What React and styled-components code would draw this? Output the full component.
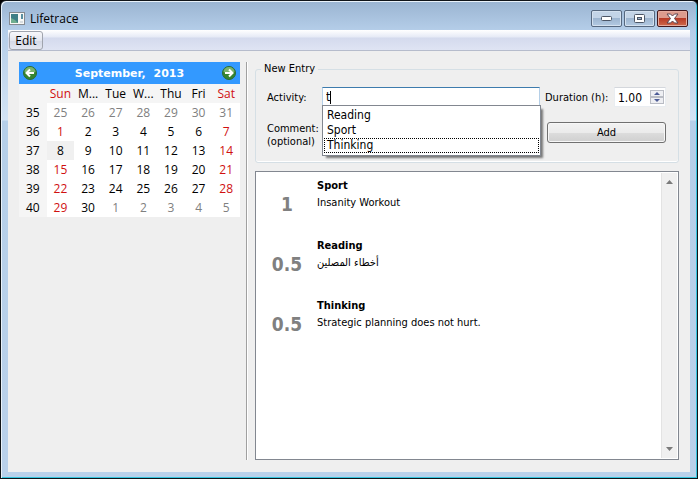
import React, { useState } from 'react';
import styled, { createGlobalStyle, css } from 'styled-components';

const GlobalStyle = createGlobalStyle`
  * {
    box-sizing: border-box;
  }

  body {
    margin: 0;
    background: #000;
    color: #000;
    font: 11px/14px "DejaVu Sans Condensed", "DejaVu Sans", Tahoma, sans-serif;
  }

  button,
  input,
  textarea {
    font: inherit;
    color: inherit;
  }
`;

const Window = styled.div`
  display: flex;
  flex-direction: column;
  min-height: 100vh;
  padding: 0 6px 6px;
  border: 1px solid #101418;
  border-radius: 6px 6px 0 0;
  background: linear-gradient(#9ab4d1, #b5cee9 30px, #d3e4f5 119px, #b5cfe9 120px, #bad1ea);
  box-shadow: inset 1px 1px 0 #e9f2fa, inset -1px -1px 0 #35c5de;
`;

const TitleBar = styled.header`
  display: flex;
  align-items: center;
  gap: 5px;
  height: 29px;
  padding: 6px 3px 0 2px;
`;

const Title = styled.h1`
  flex: 1;
  margin: 0;
  font: 12px/16px "Open Sans", sans-serif;
`;

const WindowButtons = styled.div`
  display: flex;
  align-self: flex-start;
  gap: 2px;
  margin-top: 3px;
`;

const WindowButton = styled.button`
  display: flex;
  align-items: center;
  justify-content: center;
  width: 31px;
  height: 17px;
  padding: 0;
  border: 1px solid #56687f;
  border-radius: 2px;
  background: linear-gradient(#c3d4e7 45%, #9db5d0 50%, #b3cae2);
  box-shadow: inset 0 0 0 1px #d4e1ef;

  ${({ $danger }) => $danger && css`
    border-color: #43181d;
    background: linear-gradient(#dc9b8e 45%, #b83b27 50%, #cf6a4c);
    box-shadow: inset 0 0 0 1px #e5ac9f;
  `}
`;

const Client = styled.div`
  display: flex;
  flex: 1;
  flex-direction: column;
  margin: 0 1px;
  background: #efefef;
`;

const MenuBar = styled.nav`
  height: 21px;
  padding: 1px;
  border-bottom: 1px solid #b6bccc;
  background: linear-gradient(#fff, #e6eaf6 35%, #d4daed 40%, #dfe4f3);
`;

const MenuButton = styled.button`
  display: block;
  width: 34px;
  height: 19px;
  padding: 0;
  border: 1px solid #a0a4ad;
  border-radius: 3px;
  background: linear-gradient(#f7f7fa, #e3e6ef 50%, #d5d9e6 55%, #e4e7f1);
  font: 12px/16px "Open Sans", sans-serif;
`;

const Content = styled.main`
  display: grid;
  flex: 1;
  grid-template-columns: 221px 3px minmax(0, 1fr);
  column-gap: 6px;
  padding: 11px 11px 12px;
`;

const Separator = styled.div`
  border-left: 1px solid #a0a0a0;
  box-shadow: inset 1px 0 0 #fff;
`;

const CalendarHeader = styled.div`
  display: flex;
  align-items: center;
  justify-content: space-between;
  height: 22px;
  padding: 0 4px;
  background: #3399ff;
`;

const CalendarTitle = styled.h2`
  display: flex;
  gap: 8px;
  margin: 0;
  padding-top: 2px;
  color: #fff;
  font: bold 11px/16px "DejaVu Sans", Verdana, sans-serif;
`;

const ArrowButton = styled.button`
  display: flex;
  padding: 0;
  border: 0;
  background: none;
`;

const Days = styled.table`
  width: 100%;
  border-collapse: collapse;
  table-layout: fixed;
  background: #fff;
  font: 12px/16px "Open Sans", sans-serif;
  text-align: center;

  th,
  td {
    height: 19px;
    padding: 0;
    font-weight: normal;
  }

  th {
    background: #f5f5f5;
  }
`;

const dayColors = { weekend: '#d01010', other: '#808080' };

const Day = styled.td`
  color: ${({ $kind }) => dayColors[$kind] || '#000'};
  background: ${({ $selected }) => ($selected ? '#f0f0f0' : 'none')};
`;

const DayName = styled.th`
  color: ${({ $weekend }) => ($weekend ? dayColors.weekend : '#000')};
`;

const Side = styled.div`
  display: flex;
  flex-direction: column;
  gap: 8px;
`;

const Group = styled.fieldset`
  display: grid;
  grid-template-columns: 50px minmax(0, 1fr) 64px 52px;
  gap: 15px 5px;
  min-width: 0;
  margin: 0;
  padding: 11px 12px 14px 11px;
  border: 1px solid #d5dfe5;
  border-radius: 3px;
  box-shadow: inset 0 -1px 0 #fff;

  legend {
    margin-left: -6px;
    padding: 0 3px;
  }
`;

const Label = styled.label`
  align-self: ${({ $top }) => ($top ? 'start' : 'center')};
  line-height: 13px;
  white-space: nowrap;
`;

const Field = styled.div`
  position: relative;
`;

const inputBox = css`
  width: 100%;
  height: 20px;
  padding: 0 3px;
  border: 1px solid #e3e9ef;
  border-top-color: #abadb3;
  background: #fff;
  font-size: 12px;
`;

const InputFrame = styled.div`
  ${inputBox}
  display: flex;
  align-items: center;
  border-color: #3d7bad #b5cfe7 #b7d9ed #b5cfe7;

  input {
    field-sizing: content;
    max-width: 100%;
    padding: 0;
    border: 0;
    outline: none;
    background: none;
    caret-color: transparent;
  }
`;

const Caret = styled.span`
  width: 1px;
  height: 13px;
  background: #000;
`;

const CommentInput = styled.input`
  ${inputBox}
`;

const Popup = styled.ul`
  position: absolute;
  z-index: 1;
  top: 18px;
  left: 0;
  right: -1px;
  margin: 0;
  padding: 2px 1px 2px;
  border: 1px solid #828790;
  background: #fff;
  box-shadow: 3px 3px 2px -1px #777;
  font-size: 12px;
  line-height: 15px;
  list-style: none;
`;

const Option = styled.li`
  height: 15px;
  padding: 0 3px;
  outline: ${({ $current }) => ($current ? '1px dotted #000' : 'none')};
  outline-offset: -1px;
`;

const SpinBox = styled.div`
  display: flex;
  height: 20px;
  padding: 2px 1px 2px 0;
  border: 1px solid #e9edf1;
  border-top-color: #d4d7dc;
  background: #fff;
  font-size: 12px;

  input {
    flex: 1;
    min-width: 0;
    padding: 2px 0 0 3px;
    border: 0;
    outline: none;
    background: none;
  }
`;

const Steps = styled.div`
  display: flex;
  flex-direction: column;
  width: 14px;
`;

const Step = styled.button`
  display: flex;
  flex: 1;
  align-items: center;
  justify-content: center;
  padding: 0;
  border: 1px solid #b9bcc4;
  background: #eeeff3;
`;

const AddButton = styled.button`
  grid-column: span 2;
  height: 21px;
  margin-left: 2px;
  padding: 0;
  border: 1px solid #707070;
  border-radius: 3px;
  background: linear-gradient(#f2f2f2, #ebebeb 50%, #dddddd 50%, #cfcfcf);
  box-shadow: inset 0 0 0 1px #f7f7f7;
`;

const ListBox = styled.section`
  display: flex;
  flex: 1;
  padding: 1px;
  border: 1px solid #828790;
  background: #fff;
`;

const Entries = styled.ul`
  flex: 1;
  margin: 0;
  padding: 0;
  list-style: none;
`;

const Entry = styled.li`
  display: grid;
  grid-template-columns: 60px 1fr;
  height: 60px;
  padding-top: 6px;
`;

const Hours = styled.span`
  padding-top: 13px;
  color: #808080;
  font-size: 19px;
  font-weight: bold;
  line-height: 24px;
  text-align: center;
`;

const EntryName = styled.h3`
  margin: 0 0 3px;
  font-size: 11px;
  line-height: 14px;
`;

const EntryComment = styled.p`
  margin: 0;
`;

const ScrollBar = styled.div`
  display: flex;
  flex-direction: column;
  align-items: center;
  justify-content: space-between;
  width: 16px;
  padding: 7px 0;
  border-left: 1px solid #e3e3e3;
  background: #f0f0f0;
`;

const dayNames = ['Sun', 'M...', 'Tue', 'W...', 'Thu', 'Fri', 'Sat'];

const weeks = [
  [35, [25, 26, 27, 28, 29, 30, 31]],
  [36, [1, 2, 3, 4, 5, 6, 7]],
  [37, [8, 9, 10, 11, 12, 13, 14]],
  [38, [15, 16, 17, 18, 19, 20, 21]],
  [39, [22, 23, 24, 25, 26, 27, 28]],
  [40, [29, 30, 1, 2, 3, 4, 5]],
];

const entries = [
  { hours: '1', name: 'Sport', comment: 'Insanity Workout' },
  { hours: '0.5', name: 'Reading', comment: 'أخطاء المصلين' },
  { hours: '0.5', name: 'Thinking', comment: 'Strategic planning does not hurt.' },
];

const activities = ['Reading', 'Sport', 'Thinking'];

const dayKind = (week, day, column) => {
  if ((week === 35 && day > 20) || (week === 40 && day < 10)) return 'other';
  return column === 0 || column === 6 ? 'weekend' : 'normal';
};

const AppIcon = () => (
  <svg width="16" height="14" viewBox="0 0 16 14">
    <rect x="0.5" y="0.5" width="15" height="12" fill="#f8f8f6" stroke="#858a90" />
    <rect x="2" y="2" width="7" height="9" fill="#3f7f86" />
    <path d="M2 11V6l4 2 3 3z" fill="#6fae8f" />
    <rect x="12" y="2" width="2" height="5" fill="#5a8fa0" />
    <rect x="11" y="9" width="3" height="2" fill="#d8dde0" />
  </svg>
);

const MonthArrow = ({ next }) => (
  <svg width="14" height="14" viewBox="0 0 14 14">
    <circle cx="7" cy="7" r="6.5" fill="#35852f" stroke="#2a6a35" />
    <path d="M1.5 6a5.5 5 0 0 1 11 0q-5.500 2.500-11 0z" fill="#7ab36c" />
    <path
      d="M11 7H4M7 3.500L3.500 7L7 10.500"
      fill="none"
      stroke="#fff"
      strokeWidth="2"
      transform={next ? 'rotate(180 7 7)' : undefined}
    />
  </svg>
);

const CloseIcon = () => (
  <svg width="13" height="11" viewBox="0 0 13 11">
    <path
      d="M1 1h3.500L6.500 3L8.500 1H12L8.500 5.500L12 10H8.500L6.500 8L4.500 10H1L4.500 5.500z"
      fill="#fff"
      stroke="#5a4450"
    />
  </svg>
);

const Triangle = ({ down, width = 7, height = 4, color = '#7a7a7a' }) => (
  <svg width={width} height={height} viewBox="0 0 8 4" preserveAspectRatio="none">
    <path d={down ? 'M0 0h8L4 4z' : 'M0 4h8L4 0z'} fill={color} />
  </svg>
);

/**
 * Month calendar with week numbers
 */
const Calendar = () => (
  <section>
    <CalendarHeader>
      <ArrowButton aria-label="Previous month"><MonthArrow /></ArrowButton>
      <CalendarTitle><span>September,</span><span>2013</span></CalendarTitle>
      <ArrowButton aria-label="Next month"><MonthArrow next /></ArrowButton>
    </CalendarHeader>
    <Days>
      <thead>
        <tr>
          <th />
          {dayNames.map((name, i) => (
            <DayName key={name} scope="col" $weekend={i % 6 === 0}>{name}</DayName>
          ))}
        </tr>
      </thead>
      <tbody>
        {weeks.map(([week, days]) => (
          <tr key={week}>
            <th scope="row">{week}</th>
            {days.map((day, i) => (
              <Day
                key={day}
                $kind={day === 8 ? 'normal' : dayKind(week, day, i)}
                $selected={day === 8}
              >
                {day}
              </Day>
            ))}
          </tr>
        ))}
      </tbody>
    </Days>
  </section>
);

/**
 * Form for a new entry, with the activity completer open
 */
const NewEntry = () => {
  const [activity, setActivity] = useState('t');
  const [duration, setDuration] = useState(1);
  const step = by => setDuration(Math.max(0, duration + by));

  return (
    <Group>
      <legend>New Entry</legend>
      <Label htmlFor="activity">Activity:</Label>
      <Field>
        <InputFrame>
          <input
            id="activity"
            autoFocus
            autoComplete="off"
            value={activity}
            onChange={e => setActivity(e.target.value)}
          />
          <Caret />
        </InputFrame>
        <Popup>
          {activities.map(name => (
            <Option key={name} $current={name === 'Thinking'} onClick={() => setActivity(name)}>
              {name}
            </Option>
          ))}
        </Popup>
      </Field>
      <Label htmlFor="duration">Duration (h):</Label>
      <SpinBox>
        <input id="duration" value={duration.toFixed(2)} readOnly />
        <Steps>
          <Step aria-label="More" onClick={() => step(0.5)}>
            <Triangle width={6} height={3} color="#4d5c96" />
          </Step>
          <Step aria-label="Less" onClick={() => step(-0.5)}>
            <Triangle down width={6} height={3} color="#4d5c96" />
          </Step>
        </Steps>
      </SpinBox>
      <Label htmlFor="comment" $top>Comment:<br />(optional)</Label>
      <CommentInput id="comment" />
      <AddButton>Add</AddButton>
    </Group>
  );
};

const App = () => (
  <>
    <GlobalStyle />
    <Window>
      <TitleBar>
        <AppIcon />
        <Title>Lifetrace</Title>
        <WindowButtons>
          <WindowButton aria-label="Minimize">
            <svg width="11" height="5">
              <rect x="0.5" y="0.5" width="10" height="4" rx="1" fill="#fff" stroke="#4c5666" />
            </svg>
          </WindowButton>
          <WindowButton aria-label="Maximize">
            <svg width="11" height="9">
              <rect x="0.5" y="0.5" width="10" height="8" rx="1" fill="#fff" stroke="#4c5666" />
              <rect x="3.5" y="3.5" width="4" height="2" fill="#9db5d0" stroke="#4c5666" />
            </svg>
          </WindowButton>
          <WindowButton aria-label="Close" $danger>
            <CloseIcon />
          </WindowButton>
        </WindowButtons>
      </TitleBar>
      <Client>
        <MenuBar>
          <MenuButton>Edit</MenuButton>
        </MenuBar>
        <Content>
          <Calendar />
          <Separator />
          <Side>
            <NewEntry />
            <ListBox>
              <Entries>
                {entries.map(({ hours, name, comment }) => (
                  <Entry key={name}>
                    <Hours>{hours}</Hours>
                    <div>
                      <EntryName>{name}</EntryName>
                      <EntryComment>{comment}</EntryComment>
                    </div>
                  </Entry>
                ))}
              </Entries>
              <ScrollBar>
                <Triangle />
                <Triangle down />
              </ScrollBar>
            </ListBox>
          </Side>
        </Content>
      </Client>
    </Window>
  </>
);

export default App;
